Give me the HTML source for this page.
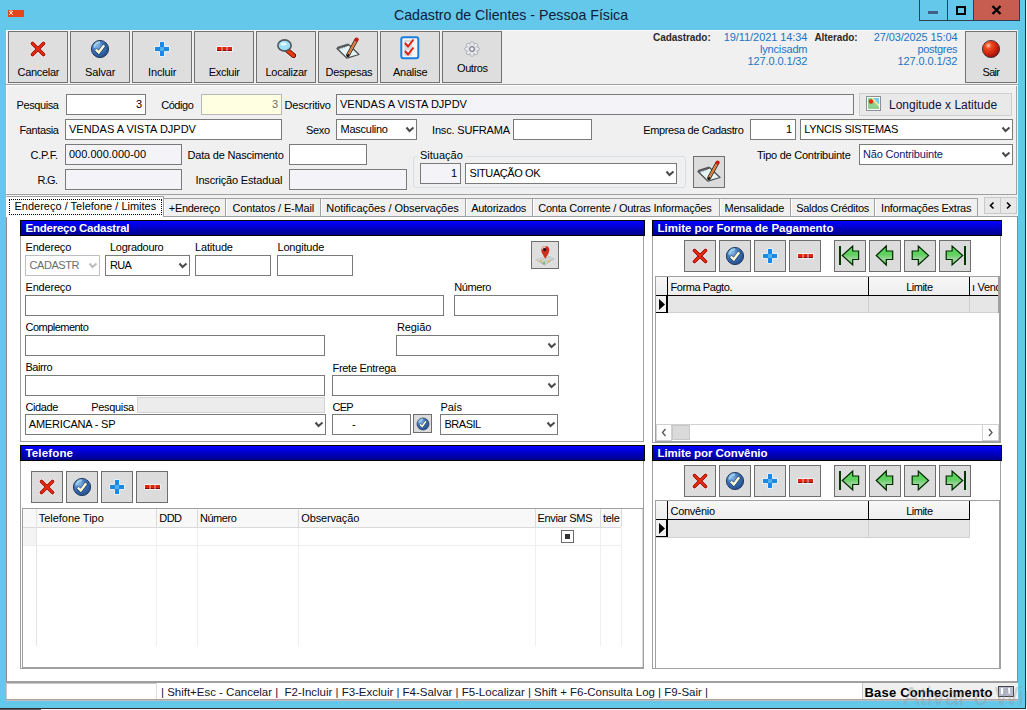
<!DOCTYPE html>
<html><head><meta charset="utf-8">
<style>
html,body{margin:0;padding:0;width:1027px;height:710px;overflow:hidden;background:#64c8ea}
body{position:relative;font-family:"Liberation Sans",sans-serif}
.a{position:absolute;box-sizing:border-box}
.t{position:absolute;white-space:nowrap;font-family:"Liberation Sans",sans-serif}
svg.a{overflow:visible}
</style></head><body>
<div class="a" style="left:0px;top:0px;width:1027px;height:710px;background:#64c8ea"></div>
<svg class="a" style="left:8px;top:10px" width="16" height="7" viewBox="0 0 16 7"><rect width="16" height="7" fill="#e5461e"/><path d="M1,1 L5,5 M5,1 L1,5 M3,0 V2" stroke="#fff6d0" stroke-width="0.9"/></svg>
<div class="t" style="top:8.08px;font-size:14.2px;line-height:14px;color:#10203a;font-weight:normal;left:311.0px;width:400px;text-align:center;">Cadastro de Clientes - Pessoa Física</div>
<div class="a" style="left:919px;top:0px;width:29px;height:21px;border:1px solid #2c3e50;border-top:none;background:#64c8ea"></div>
<div class="a" style="left:947px;top:0px;width:27px;height:21px;border:1px solid #2c3e50;border-top:none;background:#64c8ea"></div>
<div class="a" style="left:973px;top:0px;width:47px;height:21px;border:1px solid #2c3e50;border-top:none;background:#c75c50"></div>
<div class="a" style="left:928px;top:11px;width:10px;height:3px;background:#3f5f88"></div>
<div class="a" style="left:956px;top:6px;width:10px;height:9px;border:2px solid #000;box-sizing:border-box"></div>
<svg class="a" style="left:991px;top:5px" width="11" height="10" viewBox="0 0 11 10"><path d="M1.5,1 L9.5,9 M9.5,1 L1.5,9" stroke="#000" stroke-width="2.4"/></svg>
<div class="a" style="left:6px;top:30px;width:1012px;height:671px;background:#f0f0f0"></div>
<div class="a" style="left:6px;top:30px;width:1012px;height:1px;background:#fafafa"></div>
<div class="a" style="left:6px;top:30px;width:1px;height:55px;background:#fafafa"></div>
<div class="a" style="left:8px;top:31px;width:60px;height:52px;border:1px solid #727272;background:#dedede;"></div>
<div class="t" style="top:65.19px;font-size:11px;line-height:14px;color:#000;font-weight:normal;letter-spacing:-0.290px;left:17.5px;">Cancelar</div>
<div class="a" style="left:70px;top:31px;width:60px;height:52px;border:1px solid #727272;background:#dedede;"></div>
<div class="t" style="top:65.19px;font-size:11px;line-height:14px;color:#000;font-weight:normal;letter-spacing:-0.138px;left:85px;">Salvar</div>
<div class="a" style="left:132px;top:31px;width:60px;height:52px;border:1px solid #727272;background:#dedede;"></div>
<div class="t" style="top:65.19px;font-size:11px;line-height:14px;color:#000;font-weight:normal;letter-spacing:-0.141px;left:148px;">Incluir</div>
<div class="a" style="left:194px;top:31px;width:60px;height:52px;border:1px solid #727272;background:#dedede;"></div>
<div class="t" style="top:65.19px;font-size:11px;line-height:14px;color:#000;font-weight:normal;letter-spacing:-0.294px;left:208.75px;">Excluir</div>
<div class="a" style="left:256px;top:31px;width:60px;height:52px;border:1px solid #727272;background:#dedede;"></div>
<div class="t" style="top:65.19px;font-size:11px;line-height:14px;color:#000;font-weight:normal;letter-spacing:-0.254px;left:265.5px;">Localizar</div>
<div class="a" style="left:318px;top:31px;width:60px;height:52px;border:1px solid #727272;background:#dedede;"></div>
<div class="t" style="top:65.19px;font-size:11px;line-height:14px;color:#000;font-weight:normal;letter-spacing:-0.275px;left:325.5px;">Despesas</div>
<div class="a" style="left:380px;top:31px;width:60px;height:52px;border:1px solid #727272;background:#dedede;"></div>
<div class="t" style="top:65.19px;font-size:11px;line-height:14px;color:#000;font-weight:normal;letter-spacing:-0.263px;left:393px;">Analise</div>
<div class="a" style="left:442px;top:31px;width:60px;height:52px;border:1px solid #727272;background:#dedede;"></div>
<div class="t" style="top:61.19px;font-size:11px;line-height:14px;color:#000;font-weight:normal;letter-spacing:-0.403px;left:457px;">Outros</div>
<svg class="a" style="left:29px;top:40px" width="18" height="18" viewBox="0 0 18 18"><g stroke-linecap="round"><path d="M3.5,3.5 L14.5,14.5 M14.5,3.5 L3.5,14.5" stroke="#fff" stroke-width="5.2" opacity="0.8"/><path d="M3.5,3.5 L14.5,14.5 M14.5,3.5 L3.5,14.5" stroke="#8c0a05" stroke-width="3.8"/><path d="M3.5,3.5 L14.5,14.5 M14.5,3.5 L3.5,14.5" stroke="#e52a12" stroke-width="2.4"/></g></svg>
<svg class="a" style="left:90.0px;top:39.0px" width="20" height="20" viewBox="-1 -1 20 20"><defs><radialGradient id="gc100049" cx="0.35" cy="0.3" r="0.8"><stop offset="0" stop-color="#8ab8e8"/><stop offset="0.45" stop-color="#3e72b8"/><stop offset="1" stop-color="#1f4a85"/></radialGradient></defs><circle cx="9" cy="9" r="8.6" fill="url(#gc100049)" stroke="#1a2f55" stroke-width="0.9"/><path d="M3.2,7.5 A6.5,6.5 0 0 1 9,2.2" fill="none" stroke="#a8e0f0" stroke-width="2" opacity="0.8"/><path d="M4.5,9.6 L7.8,12.8 L13.6,4.8" fill="none" stroke="#1a3d70" stroke-width="3.6" stroke-linejoin="round"/><path d="M4.8,9.6 L7.8,12.4 L13.2,5.2" fill="none" stroke="#fffbd0" stroke-width="2.4" stroke-linejoin="miter"/></svg>
<svg class="a" style="left:153px;top:40px" width="18" height="18" viewBox="0 0 18 18"><path d="M6.5,1.5 H11.5 V6.5 H16.5 V11.5 H11.5 V16.5 H6.5 V11.5 H1.5 V6.5 H6.5 Z" fill="#1e88e0" stroke="#fff" stroke-width="0.8"/><rect x="7" y="7" width="4" height="4" fill="#4fb0f0"/></svg>
<svg class="a" style="left:216px;top:46px" width="17" height="6" viewBox="0 0 17 6"><rect x="0" y="0" width="17" height="6" fill="#fff" opacity="0.6"/><rect x="1" y="1" width="15" height="4" fill="#e0240e"/><rect x="1" y="4" width="15" height="1" fill="#8c0c05"/><rect x="5.5" y="1" width="1" height="4" fill="#f0c0a0"/><rect x="10.5" y="1" width="1" height="4" fill="#d0b8e0"/></svg>
<svg class="a" style="left:275px;top:38px" width="22" height="20" viewBox="0 0 22 20"><path d="M12,12 L18.5,17.5" stroke="#fff" stroke-width="6.5" stroke-linecap="round"/><path d="M12.5,12.5 L18.5,17.5" stroke="#4a0a10" stroke-width="5.2" stroke-linecap="round"/><path d="M12.5,12.5 L18.5,17.5" stroke="#e53a10" stroke-width="3.6" stroke-linecap="round"/><ellipse cx="9.5" cy="7.5" rx="6.6" ry="5.6" fill="#9ee0fa" stroke="#50545a" stroke-width="1.6"/><ellipse cx="8.5" cy="6" rx="3" ry="1.5" fill="#e8f8ff"/></svg>
<svg class="a" style="left:335px;top:35px" width="28" height="26" viewBox="0 0 28 26"><path d="M2,13.5 L13.5,9.5 L24,19.5 L12,23.2 Z" fill="#e4f6f8" stroke="#505050" stroke-width="1.3" stroke-linejoin="round"/><path d="M2.3,13.2 L13.3,9.6" stroke="#555" stroke-width="2.4"/><path d="M4,13.5 L5,15 M6.5,12.6 L7.5,14.2 M9,11.8 L10,13.4" stroke="#9ab" stroke-width="0.9"/><path d="M13,20 L21,5.5" stroke="#3a2a20" stroke-width="3.8" stroke-linecap="round"/><path d="M13,20 L21,5.5" stroke="#f2a860" stroke-width="2.1" stroke-linecap="round"/><path d="M13.6,18.6 L20.6,6.2" stroke="#d05020" stroke-width="0.8"/><circle cx="21.6" cy="4.6" r="2.1" fill="#c81a10"/><path d="M12.3,21.6 L13.6,19.2" stroke="#000" stroke-width="1.6"/></svg>
<svg class="a" style="left:400px;top:36px" width="20" height="24" viewBox="0 0 20 24"><rect x="1.3" y="1.3" width="17" height="21" rx="2" fill="#f4f4f4" stroke="#1a7fe0" stroke-width="2"/><rect x="5" y="5" width="6" height="6" fill="none" stroke="#c0c0c0" stroke-width="1"/><rect x="5" y="13" width="6" height="6" fill="none" stroke="#c0c0c0" stroke-width="1"/><path d="M5,7 L8,10.5 L13.5,3.5" fill="none" stroke="#e02010" stroke-width="2"/><path d="M5,15 L8,18.5 L13.5,11.5" fill="none" stroke="#e02010" stroke-width="2"/></svg>
<svg class="a" style="left:464px;top:40.65px" width="16" height="16" viewBox="0 0 16 16"><circle cx="13.40" cy="8.00" r="1.9" fill="#ececee" stroke="#a4a8b2" stroke-width="0.9"/><circle cx="11.82" cy="11.82" r="1.9" fill="#ececee" stroke="#a4a8b2" stroke-width="0.9"/><circle cx="8.00" cy="13.40" r="1.9" fill="#ececee" stroke="#a4a8b2" stroke-width="0.9"/><circle cx="4.18" cy="11.82" r="1.9" fill="#ececee" stroke="#a4a8b2" stroke-width="0.9"/><circle cx="2.60" cy="8.00" r="1.9" fill="#ececee" stroke="#a4a8b2" stroke-width="0.9"/><circle cx="4.18" cy="4.18" r="1.9" fill="#ececee" stroke="#a4a8b2" stroke-width="0.9"/><circle cx="8.00" cy="2.60" r="1.9" fill="#ececee" stroke="#a4a8b2" stroke-width="0.9"/><circle cx="11.82" cy="4.18" r="1.9" fill="#ececee" stroke="#a4a8b2" stroke-width="0.9"/><circle cx="8" cy="8" r="5" fill="#e4e4e6"/><circle cx="8" cy="8" r="2.3" fill="#f6f6f6" stroke="#7c808e" stroke-width="1.3"/></svg>
<div class="t" style="top:30.54px;font-size:10px;line-height:14px;color:#2a2a2a;font-weight:bold;letter-spacing:-0.061px;left:653px;">Cadastrado:</div>
<div class="t" style="top:30.19px;font-size:11px;line-height:14px;color:#1c74c4;font-weight:normal;letter-spacing:-0.072px;left:723.75px;">19/11/2021 14:34</div>
<div class="t" style="top:42.19px;font-size:11px;line-height:14px;color:#1c74c4;font-weight:normal;letter-spacing:-0.176px;left:760px;">lyncisadm</div>
<div class="t" style="top:54.19px;font-size:11px;line-height:14px;color:#1c74c4;font-weight:normal;letter-spacing:-0.107px;left:747.5px;">127.0.0.1/32</div>
<div class="t" style="top:30.54px;font-size:10px;line-height:14px;color:#2a2a2a;font-weight:bold;letter-spacing:-0.113px;left:814.5px;">Alterado:</div>
<div class="t" style="top:30.19px;font-size:11px;line-height:14px;color:#1c74c4;font-weight:normal;letter-spacing:-0.126px;left:873.75px;">27/03/2025 15:04</div>
<div class="t" style="top:42.19px;font-size:11px;line-height:14px;color:#1c74c4;font-weight:normal;letter-spacing:-0.315px;left:917.5px;">postgres</div>
<div class="t" style="top:54.19px;font-size:11px;line-height:14px;color:#1c74c4;font-weight:normal;letter-spacing:-0.107px;left:897.5px;">127.0.0.1/32</div>
<div class="a" style="left:965px;top:31px;width:52px;height:52px;border:1px solid #727272;background:#dedede;"></div>
<svg class="a" style="left:981px;top:39px" width="20" height="20" viewBox="0 0 20 20"><defs><radialGradient id="gball" cx="0.35" cy="0.3" r="0.75"><stop offset="0" stop-color="#ffd0b0"/><stop offset="0.25" stop-color="#f04a20"/><stop offset="0.7" stop-color="#c81e0e"/><stop offset="1" stop-color="#8a1008"/></radialGradient></defs><circle cx="10" cy="10" r="8.6" fill="url(#gball)" stroke="#2a2a3a" stroke-width="0.8"/></svg>
<div class="t" style="top:65.19px;font-size:11px;line-height:14px;color:#000;font-weight:normal;letter-spacing:-0.688px;left:982.5px;">Sair</div>
<div class="a" style="left:6px;top:84px;width:1012px;height:1px;background:#a0a0a0"></div>
<div class="a" style="left:6px;top:85px;width:1012px;height:1px;background:#ffffff"></div>
<div class="a" style="left:6px;top:86px;width:1px;height:108px;background:#ffffff"></div>
<div class="a" style="left:1016px;top:86px;width:1px;height:109px;background:#a0a0a0"></div>
<div class="a" style="left:6px;top:194px;width:1011px;height:1px;background:#a0a0a0"></div>
<div class="t" style="top:98.19px;font-size:11px;line-height:14px;color:#000;font-weight:normal;letter-spacing:-0.395px;left:16.5px;">Pesquisa</div>
<div class="a" style="left:66px;top:94px;width:80px;height:21px;border:1px solid #7a7a7a;background:#fff;"></div>
<div class="t" style="top:97.19px;font-size:11px;line-height:14px;color:#000;font-weight:normal;right:885px;text-align:right;">3</div>
<div class="t" style="top:98.19px;font-size:11px;line-height:14px;color:#000;font-weight:normal;letter-spacing:-0.472px;left:161.25px;">Código</div>
<div class="a" style="left:201px;top:94px;width:81px;height:21px;border:1px solid #b8b8b8;background:#ffffe1;"></div>
<div class="t" style="top:97.19px;font-size:11px;line-height:14px;color:#6d6d6d;font-weight:normal;right:749px;text-align:right;">3</div>
<div class="t" style="top:98.19px;font-size:11px;line-height:14px;color:#000;font-weight:normal;letter-spacing:-0.200px;left:284.5px;">Descritivo</div>
<div class="a" style="left:336px;top:94px;width:518px;height:21px;border:1px solid #7a7a7a;background:#f4f4f8;"></div>
<div class="t" style="top:97.19px;font-size:11px;line-height:14px;color:#000;font-weight:normal;left:340px;">VENDAS A VISTA DJPDV</div>
<div class="a" style="left:859px;top:93px;width:153px;height:23px;border:1px solid #cfcfcf;background:#e9e9e9"></div>
<svg class="a" style="left:866px;top:96px" width="15" height="15" viewBox="0 0 15 15"><rect x="0.5" y="0.5" width="14" height="14" fill="#fff" stroke="#8a8f98"/><rect x="2" y="2" width="11" height="11" fill="#8fd08f"/><path d="M7,2 H13 V9 Z" fill="#7ccbf0"/><path d="M6,2 L13,10" stroke="#f6f0a0" stroke-width="1.5"/><circle cx="5" cy="5.5" r="2.2" fill="#e03010"/></svg>
<div class="t" style="top:97.84px;font-size:12px;line-height:14px;color:#10103a;font-weight:normal;left:889px;">Longitude x Latitude</div>
<div class="t" style="top:123.19px;font-size:11px;line-height:14px;color:#000;font-weight:normal;letter-spacing:-0.386px;left:19.5px;">Fantasia</div>
<div class="a" style="left:65px;top:119px;width:217px;height:21px;border:1px solid #7a7a7a;background:#fff;"></div>
<div class="t" style="top:122.19px;font-size:11px;line-height:14px;color:#000;font-weight:normal;left:69px;">VENDAS A VISTA DJPDV</div>
<div class="t" style="top:123.19px;font-size:11px;line-height:14px;color:#000;font-weight:normal;letter-spacing:-0.359px;left:306px;">Sexo</div>
<div class="a" style="left:336px;top:119px;width:81px;height:21px;border:1px solid #7a7a7a;background:#fff;"></div>
<div class="t" style="top:122.19px;font-size:11px;line-height:14px;color:#000;font-weight:normal;letter-spacing:-0.254px;left:340.5px;">Masculino</div>
<svg class="a" style="left:405px;top:126px" width="10" height="8" viewBox="0 0 10 8"><polyline points="1.5,1.5 4.5,5 8.5,1.5" fill="none" stroke="#4a4a4a" stroke-width="2"/></svg>
<div class="t" style="top:123.19px;font-size:11px;line-height:14px;color:#000;font-weight:normal;letter-spacing:-0.173px;left:432px;">Insc. SUFRAMA</div>
<div class="a" style="left:513px;top:119px;width:79px;height:21px;border:1px solid #7a7a7a;background:#fff;"></div>
<div class="t" style="top:123.19px;font-size:11px;line-height:14px;color:#000;font-weight:normal;letter-spacing:-0.361px;left:643.25px;">Empresa de Cadastro</div>
<div class="a" style="left:750px;top:119px;width:46px;height:21px;border:1px solid #7a7a7a;background:#fff;"></div>
<div class="t" style="top:122.19px;font-size:11px;line-height:14px;color:#000;font-weight:normal;right:235px;text-align:right;">1</div>
<div class="a" style="left:800px;top:119px;width:213px;height:21px;border:1px solid #7a7a7a;background:#fff;"></div>
<div class="t" style="top:122.19px;font-size:11px;line-height:14px;color:#000;font-weight:normal;letter-spacing:-0.258px;left:804.25px;">LYNCIS SISTEMAS</div>
<svg class="a" style="left:1001px;top:126px" width="10" height="8" viewBox="0 0 10 8"><polyline points="1.5,1.5 4.5,5 8.5,1.5" fill="none" stroke="#4a4a4a" stroke-width="2"/></svg>
<div class="t" style="top:148.19px;font-size:11px;line-height:14px;color:#000;font-weight:normal;letter-spacing:-0.206px;left:30.5px;">C.P.F.</div>
<div class="a" style="left:65px;top:144px;width:117px;height:21px;border:1px solid #7a7a7a;background:#f4f4f8;"></div>
<div class="t" style="top:147.19px;font-size:11px;line-height:14px;color:#000;font-weight:normal;left:69px;">000.000.000-00</div>
<div class="t" style="top:148.19px;font-size:11px;line-height:14px;color:#000;font-weight:normal;letter-spacing:-0.201px;left:187.5px;">Data de Nascimento</div>
<div class="a" style="left:289px;top:144px;width:78px;height:21px;border:1px solid #7a7a7a;background:#fff;"></div>
<div class="t" style="top:148.19px;font-size:11px;line-height:14px;color:#000;font-weight:normal;letter-spacing:-0.258px;left:757px;">Tipo de Contribuinte</div>
<div class="a" style="left:859px;top:144px;width:154px;height:21px;border:1px solid #7a7a7a;background:#fff;"></div>
<div class="t" style="top:147.19px;font-size:11px;line-height:14px;color:#0c1a6a;font-weight:normal;letter-spacing:-0.171px;left:863px;">Não Contribuinte</div>
<svg class="a" style="left:1001px;top:151px" width="10" height="8" viewBox="0 0 10 8"><polyline points="1.5,1.5 4.5,5 8.5,1.5" fill="none" stroke="#4a4a4a" stroke-width="2"/></svg>
<div class="t" style="top:173.19px;font-size:11px;line-height:14px;color:#000;font-weight:normal;letter-spacing:-0.708px;left:37.5px;">R.G.</div>
<div class="a" style="left:65px;top:169px;width:117px;height:21px;border:1px solid #7a7a7a;background:#f4f4f8;"></div>
<div class="t" style="top:173.19px;font-size:11px;line-height:14px;color:#000;font-weight:normal;letter-spacing:-0.170px;left:195.5px;">Inscrição Estadual</div>
<div class="a" style="left:289px;top:169px;width:118px;height:21px;border:1px solid #7a7a7a;background:#f4f4f8;"></div>
<div class="a" style="left:413px;top:156px;width:273px;height:32px;border:1px solid #d8e0e6;border-radius:3px"></div>
<div class="a" style="left:418px;top:152px;width:48px;height:8px;background:#f0f0f0"></div>
<div class="t" style="top:148.19px;font-size:11px;line-height:14px;color:#000;font-weight:normal;left:420px;">Situação</div>
<div class="a" style="left:420px;top:163px;width:41px;height:21px;border:1px solid #7a7a7a;background:#f4f4f8;"></div>
<div class="t" style="top:166.19px;font-size:11px;line-height:14px;color:#000;font-weight:normal;right:570px;text-align:right;">1</div>
<div class="a" style="left:465px;top:163px;width:212px;height:21px;border:1px solid #7a7a7a;background:#fff;"></div>
<div class="t" style="top:166.19px;font-size:11px;line-height:14px;color:#000;font-weight:normal;letter-spacing:-0.419px;left:469.5px;">SITUAÇÃO OK</div>
<svg class="a" style="left:665px;top:170px" width="10" height="8" viewBox="0 0 10 8"><polyline points="1.5,1.5 4.5,5 8.5,1.5" fill="none" stroke="#4a4a4a" stroke-width="2"/></svg>
<div class="a" style="left:693px;top:156px;width:32px;height:32px;border:1px solid #6e6e6e;background:#dcdcdc"></div>
<svg class="a" style="left:696px;top:158px" width="28" height="26" viewBox="0 0 28 26"><path d="M2,13.5 L13.5,9.5 L24,19.5 L12,23.2 Z" fill="#e4f6f8" stroke="#505050" stroke-width="1.3" stroke-linejoin="round"/><path d="M2.3,13.2 L13.3,9.6" stroke="#555" stroke-width="2.4"/><path d="M4,13.5 L5,15 M6.5,12.6 L7.5,14.2 M9,11.8 L10,13.4" stroke="#9ab" stroke-width="0.9"/><path d="M13,20 L21,5.5" stroke="#3a2a20" stroke-width="3.8" stroke-linecap="round"/><path d="M13,20 L21,5.5" stroke="#f2a860" stroke-width="2.1" stroke-linecap="round"/><path d="M13.6,18.6 L20.6,6.2" stroke="#d05020" stroke-width="0.8"/><circle cx="21.6" cy="4.6" r="2.1" fill="#c81a10"/><path d="M12.3,21.6 L13.6,19.2" stroke="#000" stroke-width="1.6"/></svg>
<div class="a" style="left:6px;top:216px;width:1012px;height:466px;border:1px solid #a0a0a0;border-left-color:#8a8a90;border-right-color:#8a8a90;background:#fff"></div>
<div class="a" style="left:163px;top:198px;width:64px;height:18px;border:1px solid #a0a0a0;border-bottom:none;background:#f0f0f0"></div>
<div class="a" style="left:225px;top:198px;width:96px;height:18px;border:1px solid #a0a0a0;border-bottom:none;background:#f0f0f0"></div>
<div class="a" style="left:320px;top:198px;width:146px;height:18px;border:1px solid #a0a0a0;border-bottom:none;background:#f0f0f0"></div>
<div class="a" style="left:465px;top:198px;width:68px;height:18px;border:1px solid #a0a0a0;border-bottom:none;background:#f0f0f0"></div>
<div class="a" style="left:532px;top:198px;width:188px;height:18px;border:1px solid #a0a0a0;border-bottom:none;background:#f0f0f0"></div>
<div class="a" style="left:719px;top:198px;width:72px;height:18px;border:1px solid #a0a0a0;border-bottom:none;background:#f0f0f0"></div>
<div class="a" style="left:790px;top:198px;width:85px;height:18px;border:1px solid #a0a0a0;border-bottom:none;background:#f0f0f0"></div>
<div class="a" style="left:874px;top:198px;width:104px;height:18px;border:1px solid #a0a0a0;border-bottom:none;background:#f0f0f0"></div>
<div class="a" style="left:164px;top:199px;width:1px;height:17px;background:#fff"></div>
<div class="t" style="top:201.19px;font-size:11px;line-height:14px;color:#000;font-weight:normal;letter-spacing:-0.283px;left:168.75px;">+Endereço</div>
<div class="a" style="left:226px;top:199px;width:1px;height:17px;background:#fff"></div>
<div class="t" style="top:201.19px;font-size:11px;line-height:14px;color:#000;font-weight:normal;letter-spacing:-0.164px;left:232.5px;">Contatos / E-Mail</div>
<div class="a" style="left:321px;top:199px;width:1px;height:17px;background:#fff"></div>
<div class="t" style="top:201.19px;font-size:11px;line-height:14px;color:#000;font-weight:normal;letter-spacing:-0.056px;left:326.25px;">Notificações / Observações</div>
<div class="a" style="left:466px;top:199px;width:1px;height:17px;background:#fff"></div>
<div class="t" style="top:201.19px;font-size:11px;line-height:14px;color:#000;font-weight:normal;letter-spacing:-0.309px;left:471.25px;">Autorizados</div>
<div class="a" style="left:533px;top:199px;width:1px;height:17px;background:#fff"></div>
<div class="t" style="top:201.19px;font-size:11px;line-height:14px;color:#000;font-weight:normal;letter-spacing:-0.220px;left:538.25px;">Conta Corrente / Outras Informações</div>
<div class="a" style="left:720px;top:199px;width:1px;height:17px;background:#fff"></div>
<div class="t" style="top:201.19px;font-size:11px;line-height:14px;color:#000;font-weight:normal;letter-spacing:-0.263px;left:724.5px;">Mensalidade</div>
<div class="a" style="left:791px;top:199px;width:1px;height:17px;background:#fff"></div>
<div class="t" style="top:201.19px;font-size:11px;line-height:14px;color:#000;font-weight:normal;letter-spacing:-0.333px;left:796.25px;">Saldos Créditos</div>
<div class="a" style="left:875px;top:199px;width:1px;height:17px;background:#fff"></div>
<div class="t" style="top:201.19px;font-size:11px;line-height:14px;color:#000;font-weight:normal;letter-spacing:-0.263px;left:881.1px;">Informações Extras</div>
<div class="a" style="left:6px;top:196px;width:158px;height:21px;border:1px solid #a0a0a0;border-left-color:#fff;border-bottom:none;background:#fff"></div>
<div class="a" style="left:9px;top:199px;width:153px;height:16px;border:1px dotted #000"></div>
<div class="t" style="top:199.19px;font-size:11px;line-height:14px;color:#000;font-weight:normal;letter-spacing:0.003px;left:14.5px;">Endereço / Telefone / Limites</div>
<div class="a" style="left:984px;top:197px;width:17px;height:17px;border:1px solid #c8c8c8;background:#e8e8e8"></div>
<div class="a" style="left:1000px;top:197px;width:17px;height:17px;border:1px solid #c8c8c8;background:#e8e8e8"></div>
<svg class="a" style="left:988px;top:201px" width="9" height="9" viewBox="0 0 9 9"><polyline points="5.5,1.5 2.5,4.5 5.5,7.5" fill="none" stroke="#000" stroke-width="1.6"/></svg>
<svg class="a" style="left:1004px;top:201px" width="9" height="9" viewBox="0 0 9 9"><polyline points="3,1.5 6,4.5 3,7.5" fill="none" stroke="#000" stroke-width="1.6"/></svg>
<div class="a" style="left:20px;top:220px;width:624px;height:222px;border:1px solid #a0a0a0;background:#fff"></div>
<div class="a" style="left:20px;top:220px;width:625px;height:16px;border:1px solid #000;background:linear-gradient(#0000ff,#00008c);"></div>
<div class="t" style="top:221.02px;font-size:11.5px;line-height:14px;color:#fff;font-weight:bold;letter-spacing:-0.236px;left:25.5px;">Endereço Cadastral</div>
<div class="t" style="top:240.19px;font-size:11px;line-height:14px;color:#000;font-weight:normal;letter-spacing:-0.192px;left:25.5px;">Endereço</div>
<div class="t" style="top:240.19px;font-size:11px;line-height:14px;color:#000;font-weight:normal;letter-spacing:-0.281px;left:110px;">Logradouro</div>
<div class="t" style="top:240.19px;font-size:11px;line-height:14px;color:#000;font-weight:normal;letter-spacing:-0.165px;left:195px;">Latitude</div>
<div class="t" style="top:240.19px;font-size:11px;line-height:14px;color:#000;font-weight:normal;letter-spacing:-0.197px;left:277.5px;">Longitude</div>
<div class="a" style="left:25px;top:255px;width:75px;height:21px;border:1px solid #bcbfc3;background:#fff;"></div>
<div class="t" style="top:258.19px;font-size:11px;line-height:14px;color:#6d6d6d;font-weight:normal;letter-spacing:-0.427px;left:29.5px;">CADASTR</div>
<svg class="a" style="left:88px;top:262px" width="10" height="8" viewBox="0 0 10 8"><polyline points="1.5,1.5 4.5,5 8.5,1.5" fill="none" stroke="#bdbdbd" stroke-width="2"/></svg>
<div class="a" style="left:105px;top:255px;width:85px;height:21px;border:1px solid #7a7a7a;background:#fff;"></div>
<div class="t" style="top:258.19px;font-size:11px;line-height:14px;color:#000;font-weight:normal;letter-spacing:-0.742px;left:110px;">RUA</div>
<svg class="a" style="left:178px;top:262px" width="10" height="8" viewBox="0 0 10 8"><polyline points="1.5,1.5 4.5,5 8.5,1.5" fill="none" stroke="#4a4a4a" stroke-width="2"/></svg>
<div class="a" style="left:195px;top:255px;width:76px;height:21px;border:1px solid #7a7a7a;background:#fff;"></div>
<div class="a" style="left:277px;top:255px;width:76px;height:21px;border:1px solid #7a7a7a;background:#fff;"></div>
<div class="a" style="left:531px;top:241px;width:28px;height:28px;border:1px solid #6e6e6e;background:#dedede"></div>
<svg class="a" style="left:532px;top:242px" width="26" height="26" viewBox="0 0 26 26"><path d="M1.5,17.5 L15,12.5 L24.5,16.5 L12.5,24.5 Z" fill="#c2c2c2" stroke="#f8f8f8" stroke-width="1" stroke-dasharray="1.2,0.8"/><path d="M4.5,17.5 L15,13.8 L21.5,16.5 L12.5,22.5 Z" fill="#d4d8d2"/><path d="M6,19 L18,15 M9,21 L20,17" stroke="#b8b8b8" stroke-width="0.7"/><circle cx="12" cy="21" r="1.5" fill="#7cc07c"/><circle cx="17" cy="19.5" r="1.1" fill="#f0b050"/><circle cx="9" cy="19" r="1" fill="#f0b050"/><path d="M13.3,16.8 C11.5,13.5 9.3,11 9.3,8 A4,4 0 0 1 17.3,8 C17.3,11 15.2,13.5 13.3,16.8 Z" fill="#cc2e1c"/><path d="M10,7.5 A3.4,3.4 0 0 1 13,4.6 L13,6" stroke="#e8b8a8" stroke-width="1.4" fill="none"/><circle cx="12.8" cy="7.6" r="1.6" fill="#1a1a1a"/></svg>
<div class="t" style="top:280.19px;font-size:11px;line-height:14px;color:#000;font-weight:normal;letter-spacing:-0.192px;left:25.5px;">Endereço</div>
<div class="t" style="top:280.19px;font-size:11px;line-height:14px;color:#000;font-weight:normal;letter-spacing:-0.425px;left:454.25px;">Número</div>
<div class="a" style="left:25px;top:295px;width:419px;height:21px;border:1px solid #7a7a7a;background:#fff;"></div>
<div class="a" style="left:454px;top:295px;width:104px;height:21px;border:1px solid #7a7a7a;background:#fff;"></div>
<div class="t" style="top:320.19px;font-size:11px;line-height:14px;color:#000;font-weight:normal;letter-spacing:-0.523px;left:25.5px;">Complemento</div>
<div class="t" style="top:320.19px;font-size:11px;line-height:14px;color:#000;font-weight:normal;letter-spacing:-0.122px;left:397px;">Região</div>
<div class="a" style="left:25px;top:335px;width:300px;height:21px;border:1px solid #7a7a7a;background:#fff;"></div>
<div class="a" style="left:396px;top:335px;width:163px;height:21px;border:1px solid #7a7a7a;background:#fff;"></div>
<svg class="a" style="left:547px;top:342px" width="10" height="8" viewBox="0 0 10 8"><polyline points="1.5,1.5 4.5,5 8.5,1.5" fill="none" stroke="#4a4a4a" stroke-width="2"/></svg>
<div class="t" style="top:360.19px;font-size:11px;line-height:14px;color:#000;font-weight:normal;letter-spacing:-0.469px;left:25.5px;">Bairro</div>
<div class="t" style="top:361.19px;font-size:11px;line-height:14px;color:#000;font-weight:normal;letter-spacing:-0.293px;left:332.5px;">Frete Entrega</div>
<div class="a" style="left:25px;top:375px;width:300px;height:21px;border:1px solid #7a7a7a;background:#fff;"></div>
<div class="a" style="left:332px;top:375px;width:227px;height:21px;border:1px solid #7a7a7a;background:#fff;"></div>
<svg class="a" style="left:547px;top:382px" width="10" height="8" viewBox="0 0 10 8"><polyline points="1.5,1.5 4.5,5 8.5,1.5" fill="none" stroke="#4a4a4a" stroke-width="2"/></svg>
<div class="t" style="top:400.19px;font-size:11px;line-height:14px;color:#000;font-weight:normal;letter-spacing:-0.422px;left:25.5px;">Cidade</div>
<div class="t" style="top:400.19px;font-size:11px;line-height:14px;color:#000;font-weight:normal;letter-spacing:-0.324px;left:91.25px;">Pesquisa</div>
<div class="a" style="left:137px;top:397px;width:188px;height:16px;border:1px solid #d4d4d4;background:#ececec;"></div>
<div class="t" style="top:400.19px;font-size:11px;line-height:14px;color:#000;font-weight:normal;letter-spacing:-0.812px;left:332.5px;">CEP</div>
<div class="t" style="top:400.19px;font-size:11px;line-height:14px;color:#000;font-weight:normal;letter-spacing:-0.172px;left:440.5px;">País</div>
<div class="a" style="left:25px;top:414px;width:301px;height:21px;border:1px solid #7a7a7a;background:#fff;"></div>
<div class="t" style="top:417.19px;font-size:11px;line-height:14px;color:#000;font-weight:normal;letter-spacing:-0.192px;left:28.75px;">AMERICANA - SP</div>
<svg class="a" style="left:314px;top:421px" width="10" height="8" viewBox="0 0 10 8"><polyline points="1.5,1.5 4.5,5 8.5,1.5" fill="none" stroke="#4a4a4a" stroke-width="2"/></svg>
<div class="a" style="left:332px;top:414px;width:79px;height:21px;border:1px solid #7a7a7a;background:#fff;"></div>
<div class="t" style="top:417.19px;font-size:11px;line-height:14px;color:#000;font-weight:normal;left:352px;">-</div>
<div class="a" style="left:413px;top:414px;width:19px;height:19px;border:1px solid #6e6e6e;background:#dcdcdc"></div>
<svg class="a" style="left:415.5px;top:416.5px" width="14" height="14" viewBox="-1 -1 20 20"><defs><radialGradient id="gc422923" cx="0.35" cy="0.3" r="0.8"><stop offset="0" stop-color="#8ab8e8"/><stop offset="0.45" stop-color="#3e72b8"/><stop offset="1" stop-color="#1f4a85"/></radialGradient></defs><circle cx="9" cy="9" r="8.6" fill="url(#gc422923)" stroke="#1a2f55" stroke-width="0.9"/><path d="M3.2,7.5 A6.5,6.5 0 0 1 9,2.2" fill="none" stroke="#a8e0f0" stroke-width="2" opacity="0.8"/><path d="M4.5,9.6 L7.8,12.8 L13.6,4.8" fill="none" stroke="#1a3d70" stroke-width="3.6" stroke-linejoin="round"/><path d="M4.8,9.6 L7.8,12.4 L13.2,5.2" fill="none" stroke="#fffbd0" stroke-width="2.4" stroke-linejoin="miter"/></svg>
<div class="a" style="left:440px;top:414px;width:118px;height:21px;border:1px solid #7a7a7a;background:#fff;"></div>
<div class="t" style="top:417.19px;font-size:11px;line-height:14px;color:#000;font-weight:normal;letter-spacing:-0.478px;left:444.5px;">BRASIL</div>
<svg class="a" style="left:546px;top:421px" width="10" height="8" viewBox="0 0 10 8"><polyline points="1.5,1.5 4.5,5 8.5,1.5" fill="none" stroke="#4a4a4a" stroke-width="2"/></svg>
<div class="a" style="left:652px;top:220px;width:349px;height:223px;border:1px solid #a0a0a0;background:#fff"></div>
<div class="a" style="left:652px;top:220px;width:350px;height:16px;border:1px solid #000;background:linear-gradient(#0000ff,#00008c);"></div>
<div class="t" style="top:221.02px;font-size:11.5px;line-height:14px;color:#fff;font-weight:bold;letter-spacing:0.009px;left:657.5px;">Limite por Forma de Pagamento</div>
<div class="a" style="left:684px;top:240px;width:32px;height:32px;border:1px solid #6e6e6e;background:#dcdcdc;"></div>
<div class="a" style="left:719px;top:240px;width:32px;height:32px;border:1px solid #6e6e6e;background:#dcdcdc;"></div>
<div class="a" style="left:754px;top:240px;width:32px;height:32px;border:1px solid #6e6e6e;background:#dcdcdc;"></div>
<div class="a" style="left:789px;top:240px;width:32px;height:32px;border:1px solid #6e6e6e;background:#dcdcdc;"></div>
<svg class="a" style="left:691px;top:247px" width="18" height="18" viewBox="0 0 18 18"><g stroke-linecap="round"><path d="M3.5,3.5 L14.5,14.5 M14.5,3.5 L3.5,14.5" stroke="#fff" stroke-width="5.2" opacity="0.8"/><path d="M3.5,3.5 L14.5,14.5 M14.5,3.5 L3.5,14.5" stroke="#8c0a05" stroke-width="3.8"/><path d="M3.5,3.5 L14.5,14.5 M14.5,3.5 L3.5,14.5" stroke="#e52a12" stroke-width="2.4"/></g></svg>
<svg class="a" style="left:725.0px;top:246.0px" width="20" height="20" viewBox="-1 -1 20 20"><defs><radialGradient id="gc735256" cx="0.35" cy="0.3" r="0.8"><stop offset="0" stop-color="#8ab8e8"/><stop offset="0.45" stop-color="#3e72b8"/><stop offset="1" stop-color="#1f4a85"/></radialGradient></defs><circle cx="9" cy="9" r="8.6" fill="url(#gc735256)" stroke="#1a2f55" stroke-width="0.9"/><path d="M3.2,7.5 A6.5,6.5 0 0 1 9,2.2" fill="none" stroke="#a8e0f0" stroke-width="2" opacity="0.8"/><path d="M4.5,9.6 L7.8,12.8 L13.6,4.8" fill="none" stroke="#1a3d70" stroke-width="3.6" stroke-linejoin="round"/><path d="M4.8,9.6 L7.8,12.4 L13.2,5.2" fill="none" stroke="#fffbd0" stroke-width="2.4" stroke-linejoin="miter"/></svg>
<svg class="a" style="left:761px;top:247px" width="18" height="18" viewBox="0 0 18 18"><path d="M6.5,1.5 H11.5 V6.5 H16.5 V11.5 H11.5 V16.5 H6.5 V11.5 H1.5 V6.5 H6.5 Z" fill="#1e88e0" stroke="#fff" stroke-width="0.8"/><rect x="7" y="7" width="4" height="4" fill="#4fb0f0"/></svg>
<svg class="a" style="left:797px;top:253px" width="17" height="6" viewBox="0 0 17 6"><rect x="0" y="0" width="17" height="6" fill="#fff" opacity="0.6"/><rect x="1" y="1" width="15" height="4" fill="#e0240e"/><rect x="1" y="4" width="15" height="1" fill="#8c0c05"/><rect x="5.5" y="1" width="1" height="4" fill="#f0c0a0"/><rect x="10.5" y="1" width="1" height="4" fill="#d0b8e0"/></svg>
<div class="a" style="left:834px;top:240px;width:32px;height:32px;border:1px solid #6e6e6e;background:#dcdcdc;"></div>
<svg class="a" style="left:834px;top:240px" width="32" height="32" viewBox="0 0 32 32"><defs><linearGradient id="ga834240" x1="0" y1="0" x2="0" y2="1"><stop offset="0" stop-color="#52d652"/><stop offset="0.45" stop-color="#60d060"/><stop offset="0.7" stop-color="#a0d4a0"/><stop offset="1" stop-color="#48c848"/></linearGradient></defs><rect x="5" y="6" width="2" height="19" fill="#003a00"/><polygon points="8.3,15.5 18.7,6 18.7,11 24.6,11 24.6,19.5 18.7,19.5 18.7,25" fill="url(#ga834240)" stroke="#002800" stroke-width="1.2" stroke-linejoin="miter"/></svg>
<div class="a" style="left:869px;top:240px;width:32px;height:32px;border:1px solid #6e6e6e;background:#dcdcdc;"></div>
<svg class="a" style="left:869px;top:240px" width="32" height="32" viewBox="0 0 32 32"><defs><linearGradient id="ga869240" x1="0" y1="0" x2="0" y2="1"><stop offset="0" stop-color="#52d652"/><stop offset="0.45" stop-color="#60d060"/><stop offset="0.7" stop-color="#a0d4a0"/><stop offset="1" stop-color="#48c848"/></linearGradient></defs><polygon points="7.3,15.5 17.3,6 17.3,11 23.7,11 23.7,19.5 17.3,19.5 17.3,25" fill="url(#ga869240)" stroke="#002800" stroke-width="1.2" stroke-linejoin="miter"/></svg>
<div class="a" style="left:904px;top:240px;width:32px;height:32px;border:1px solid #6e6e6e;background:#dcdcdc;"></div>
<svg class="a" style="left:904px;top:240px" width="32" height="32" viewBox="0 0 32 32"><defs><linearGradient id="ga904240" x1="0" y1="0" x2="0" y2="1"><stop offset="0" stop-color="#52d652"/><stop offset="0.45" stop-color="#60d060"/><stop offset="0.7" stop-color="#a0d4a0"/><stop offset="1" stop-color="#48c848"/></linearGradient></defs><polygon points="8.2,11 14.3,11 14.3,6 24.6,15.5 14.3,25 14.3,19.5 8.2,19.5" fill="url(#ga904240)" stroke="#002800" stroke-width="1.2" stroke-linejoin="miter"/></svg>
<div class="a" style="left:939px;top:240px;width:32px;height:32px;border:1px solid #6e6e6e;background:#dcdcdc;"></div>
<svg class="a" style="left:939px;top:240px" width="32" height="32" viewBox="0 0 32 32"><defs><linearGradient id="ga939240" x1="0" y1="0" x2="0" y2="1"><stop offset="0" stop-color="#52d652"/><stop offset="0.45" stop-color="#60d060"/><stop offset="0.7" stop-color="#a0d4a0"/><stop offset="1" stop-color="#48c848"/></linearGradient></defs><rect x="25" y="6" width="2" height="19" fill="#003a00"/><polygon points="7.2,11 13.1,11 13.1,6 23.7,15.5 13.1,25 13.1,19.5 7.2,19.5" fill="url(#ga939240)" stroke="#002800" stroke-width="1.2" stroke-linejoin="miter"/></svg>
<div class="a" style="left:655px;top:276px;width:345px;height:166px;border:1px solid #a0a0a0;background:#fff"></div>
<div class="a" style="left:656px;top:277px;width:343px;height:19px;background:linear-gradient(#f8f8f8,#ececec)"></div>
<div class="a" style="left:656px;top:295px;width:343px;height:1px;background:#000"></div>
<div class="a" style="left:656px;top:296px;width:343px;height:17px;background:#e6e6e6"></div>
<div class="a" style="left:656px;top:312px;width:343px;height:1px;background:#cfcfcf"></div>
<div class="a" style="left:667px;top:277px;width:1px;height:36px;background:#000"></div>
<div class="a" style="left:656px;top:296px;width:11px;height:17px;background:#f0f0f0;border-right:1px solid #000;border-bottom:1px solid #000"></div>
<svg class="a" style="left:658px;top:298px" width="8" height="13" viewBox="0 0 8 13"><polygon points="1,1 7,6.5 1,12" fill="#000"/></svg>
<div class="a" style="left:868px;top:277px;width:1px;height:19px;background:#000"></div>
<div class="a" style="left:868px;top:296px;width:1px;height:17px;background:#cfcfcf"></div>
<div class="a" style="left:969px;top:277px;width:1px;height:19px;background:#000"></div>
<div class="a" style="left:969px;top:296px;width:1px;height:17px;background:#cfcfcf"></div>
<div class="t" style="top:280.19px;font-size:11px;line-height:14px;color:#000;font-weight:normal;letter-spacing:-0.422px;left:670.5px;">Forma Pagto.</div>
<div class="t" style="top:280.19px;font-size:11px;line-height:14px;color:#000;font-weight:normal;letter-spacing:-0.519px;left:906.25px;">Limite</div>
<div class="a" style="left:970px;top:277px;width:28px;height:18px;overflow:hidden">
<div class="t" style="top:3.19px;font-size:11px;line-height:14px;color:#000;font-weight:normal;letter-spacing:-0.3px;left:2px;">ı Vend</div>
</div>
<div class="a" style="left:998px;top:277px;width:1px;height:36px;background:#a0a0a0"></div>
<div class="a" style="left:656px;top:424px;width:343px;height:17px;background:#fff;border-top:1px solid #d0d0d0"></div>
<div class="a" style="left:656px;top:424px;width:16px;height:17px;border:1px solid #d0d0d0;background:#fff"></div>
<div class="a" style="left:672px;top:425px;width:18px;height:15px;background:#dadada;border:1px solid #c8c8c8"></div>
<div class="a" style="left:982px;top:424px;width:17px;height:17px;border:1px solid #d0d0d0;background:#fff"></div>
<svg class="a" style="left:660px;top:428px" width="9" height="9" viewBox="0 0 9 9"><polyline points="5.5,1 2.5,4.5 5.5,8" fill="none" stroke="#555" stroke-width="1.3"/></svg>
<svg class="a" style="left:986px;top:428px" width="9" height="9" viewBox="0 0 9 9"><polyline points="3,1 6,4.5 3,8" fill="none" stroke="#555" stroke-width="1.3"/></svg>
<div class="a" style="left:20px;top:445px;width:624px;height:224px;border:1px solid #a0a0a0;background:#fff"></div>
<div class="a" style="left:20px;top:445px;width:625px;height:16px;border:1px solid #000;background:linear-gradient(#0000ff,#00008c);"></div>
<div class="t" style="top:446.02px;font-size:11.5px;line-height:14px;color:#fff;font-weight:bold;letter-spacing:0.152px;left:25.5px;">Telefone</div>
<div class="a" style="left:31px;top:471px;width:32px;height:32px;border:1px solid #6e6e6e;background:#dcdcdc;"></div>
<div class="a" style="left:66px;top:471px;width:32px;height:32px;border:1px solid #6e6e6e;background:#dcdcdc;"></div>
<div class="a" style="left:101px;top:471px;width:32px;height:32px;border:1px solid #6e6e6e;background:#dcdcdc;"></div>
<div class="a" style="left:136px;top:471px;width:32px;height:32px;border:1px solid #6e6e6e;background:#dcdcdc;"></div>
<svg class="a" style="left:38px;top:478px" width="18" height="18" viewBox="0 0 18 18"><g stroke-linecap="round"><path d="M3.5,3.5 L14.5,14.5 M14.5,3.5 L3.5,14.5" stroke="#fff" stroke-width="5.2" opacity="0.8"/><path d="M3.5,3.5 L14.5,14.5 M14.5,3.5 L3.5,14.5" stroke="#8c0a05" stroke-width="3.8"/><path d="M3.5,3.5 L14.5,14.5 M14.5,3.5 L3.5,14.5" stroke="#e52a12" stroke-width="2.4"/></g></svg>
<svg class="a" style="left:72.0px;top:477.0px" width="20" height="20" viewBox="-1 -1 20 20"><defs><radialGradient id="gc82487" cx="0.35" cy="0.3" r="0.8"><stop offset="0" stop-color="#8ab8e8"/><stop offset="0.45" stop-color="#3e72b8"/><stop offset="1" stop-color="#1f4a85"/></radialGradient></defs><circle cx="9" cy="9" r="8.6" fill="url(#gc82487)" stroke="#1a2f55" stroke-width="0.9"/><path d="M3.2,7.5 A6.5,6.5 0 0 1 9,2.2" fill="none" stroke="#a8e0f0" stroke-width="2" opacity="0.8"/><path d="M4.5,9.6 L7.8,12.8 L13.6,4.8" fill="none" stroke="#1a3d70" stroke-width="3.6" stroke-linejoin="round"/><path d="M4.8,9.6 L7.8,12.4 L13.2,5.2" fill="none" stroke="#fffbd0" stroke-width="2.4" stroke-linejoin="miter"/></svg>
<svg class="a" style="left:108px;top:478px" width="18" height="18" viewBox="0 0 18 18"><path d="M6.5,1.5 H11.5 V6.5 H16.5 V11.5 H11.5 V16.5 H6.5 V11.5 H1.5 V6.5 H6.5 Z" fill="#1e88e0" stroke="#fff" stroke-width="0.8"/><rect x="7" y="7" width="4" height="4" fill="#4fb0f0"/></svg>
<svg class="a" style="left:144px;top:484px" width="17" height="6" viewBox="0 0 17 6"><rect x="0" y="0" width="17" height="6" fill="#fff" opacity="0.6"/><rect x="1" y="1" width="15" height="4" fill="#e0240e"/><rect x="1" y="4" width="15" height="1" fill="#8c0c05"/><rect x="5.5" y="1" width="1" height="4" fill="#f0c0a0"/><rect x="10.5" y="1" width="1" height="4" fill="#d0b8e0"/></svg>
<div class="a" style="left:22px;top:508px;width:622px;height:160px;border:1px solid #a0a0a0;background:#fff"></div>
<div class="a" style="left:642px;top:509px;width:1px;height:158px;background:#d8d8d8"></div>
<div class="a" style="left:23px;top:509px;width:598px;height:18px;background:#f8f8f8"></div>
<div class="a" style="left:23px;top:527px;width:598px;height:1px;background:#dadada"></div>
<div class="a" style="left:23px;top:545px;width:598px;height:1px;background:#eeeeee"></div>
<div class="a" style="left:23px;top:528px;width:13px;height:17px;background:#f4f4f4"></div>
<div class="a" style="left:36px;top:509px;width:1px;height:18px;background:#dadada"></div>
<div class="a" style="left:36px;top:528px;width:1px;height:118px;background:#efefef"></div>
<div class="a" style="left:156px;top:509px;width:1px;height:18px;background:#dadada"></div>
<div class="a" style="left:156px;top:528px;width:1px;height:118px;background:#efefef"></div>
<div class="a" style="left:197px;top:509px;width:1px;height:18px;background:#dadada"></div>
<div class="a" style="left:197px;top:528px;width:1px;height:118px;background:#efefef"></div>
<div class="a" style="left:298px;top:509px;width:1px;height:18px;background:#dadada"></div>
<div class="a" style="left:298px;top:528px;width:1px;height:118px;background:#efefef"></div>
<div class="a" style="left:535px;top:509px;width:1px;height:18px;background:#dadada"></div>
<div class="a" style="left:535px;top:528px;width:1px;height:118px;background:#efefef"></div>
<div class="a" style="left:600px;top:509px;width:1px;height:18px;background:#dadada"></div>
<div class="a" style="left:600px;top:528px;width:1px;height:118px;background:#efefef"></div>
<div class="a" style="left:621px;top:509px;width:1px;height:18px;background:#dadada"></div>
<div class="a" style="left:621px;top:528px;width:1px;height:118px;background:#efefef"></div>
<div class="a" style="left:36px;top:509px;width:1px;height:137px;background:#e4e4e4"></div>
<div class="t" style="top:511.19px;font-size:11px;line-height:14px;color:#000;font-weight:normal;letter-spacing:-0.036px;left:38.75px;">Telefone Tipo</div>
<div class="t" style="top:511.19px;font-size:11px;line-height:14px;color:#000;font-weight:normal;letter-spacing:-0.547px;left:159.25px;">DDD</div>
<div class="t" style="top:511.19px;font-size:11px;line-height:14px;color:#000;font-weight:normal;letter-spacing:-0.475px;left:200px;">Número</div>
<div class="t" style="top:511.19px;font-size:11px;line-height:14px;color:#000;font-weight:normal;letter-spacing:-0.146px;left:301.25px;">Observação</div>
<div class="t" style="top:511.19px;font-size:11px;line-height:14px;color:#000;font-weight:normal;letter-spacing:-0.342px;left:537.5px;">Enviar SMS</div>
<div class="a" style="left:601px;top:509px;width:20px;height:18px;overflow:hidden">
<div class="t" style="top:2.19px;font-size:11px;line-height:14px;color:#000;font-weight:normal;letter-spacing:-0.3px;left:2px;">tele</div>
</div>
<div class="a" style="left:561px;top:530px;width:13px;height:13px;border:1px solid #6a6a6a;background:#fff"></div>
<div class="a" style="left:565px;top:534px;width:5px;height:5px;background:#333"></div>
<div class="a" style="left:652px;top:445px;width:349px;height:224px;border:1px solid #a0a0a0;background:#fff"></div>
<div class="a" style="left:652px;top:445px;width:350px;height:16px;border:1px solid #000;background:linear-gradient(#0000ff,#00008c);"></div>
<div class="t" style="top:446.02px;font-size:11.5px;line-height:14px;color:#fff;font-weight:bold;letter-spacing:-0.065px;left:657.5px;">Limite por Convênio</div>
<div class="a" style="left:684px;top:465px;width:32px;height:32px;border:1px solid #6e6e6e;background:#dcdcdc;"></div>
<div class="a" style="left:719px;top:465px;width:32px;height:32px;border:1px solid #6e6e6e;background:#dcdcdc;"></div>
<div class="a" style="left:754px;top:465px;width:32px;height:32px;border:1px solid #6e6e6e;background:#dcdcdc;"></div>
<div class="a" style="left:789px;top:465px;width:32px;height:32px;border:1px solid #6e6e6e;background:#dcdcdc;"></div>
<svg class="a" style="left:691px;top:472px" width="18" height="18" viewBox="0 0 18 18"><g stroke-linecap="round"><path d="M3.5,3.5 L14.5,14.5 M14.5,3.5 L3.5,14.5" stroke="#fff" stroke-width="5.2" opacity="0.8"/><path d="M3.5,3.5 L14.5,14.5 M14.5,3.5 L3.5,14.5" stroke="#8c0a05" stroke-width="3.8"/><path d="M3.5,3.5 L14.5,14.5 M14.5,3.5 L3.5,14.5" stroke="#e52a12" stroke-width="2.4"/></g></svg>
<svg class="a" style="left:725.0px;top:471.0px" width="20" height="20" viewBox="-1 -1 20 20"><defs><radialGradient id="gc735481" cx="0.35" cy="0.3" r="0.8"><stop offset="0" stop-color="#8ab8e8"/><stop offset="0.45" stop-color="#3e72b8"/><stop offset="1" stop-color="#1f4a85"/></radialGradient></defs><circle cx="9" cy="9" r="8.6" fill="url(#gc735481)" stroke="#1a2f55" stroke-width="0.9"/><path d="M3.2,7.5 A6.5,6.5 0 0 1 9,2.2" fill="none" stroke="#a8e0f0" stroke-width="2" opacity="0.8"/><path d="M4.5,9.6 L7.8,12.8 L13.6,4.8" fill="none" stroke="#1a3d70" stroke-width="3.6" stroke-linejoin="round"/><path d="M4.8,9.6 L7.8,12.4 L13.2,5.2" fill="none" stroke="#fffbd0" stroke-width="2.4" stroke-linejoin="miter"/></svg>
<svg class="a" style="left:761px;top:472px" width="18" height="18" viewBox="0 0 18 18"><path d="M6.5,1.5 H11.5 V6.5 H16.5 V11.5 H11.5 V16.5 H6.5 V11.5 H1.5 V6.5 H6.5 Z" fill="#1e88e0" stroke="#fff" stroke-width="0.8"/><rect x="7" y="7" width="4" height="4" fill="#4fb0f0"/></svg>
<svg class="a" style="left:797px;top:478px" width="17" height="6" viewBox="0 0 17 6"><rect x="0" y="0" width="17" height="6" fill="#fff" opacity="0.6"/><rect x="1" y="1" width="15" height="4" fill="#e0240e"/><rect x="1" y="4" width="15" height="1" fill="#8c0c05"/><rect x="5.5" y="1" width="1" height="4" fill="#f0c0a0"/><rect x="10.5" y="1" width="1" height="4" fill="#d0b8e0"/></svg>
<div class="a" style="left:834px;top:465px;width:32px;height:32px;border:1px solid #6e6e6e;background:#dcdcdc;"></div>
<svg class="a" style="left:834px;top:465px" width="32" height="32" viewBox="0 0 32 32"><defs><linearGradient id="ga834465" x1="0" y1="0" x2="0" y2="1"><stop offset="0" stop-color="#52d652"/><stop offset="0.45" stop-color="#60d060"/><stop offset="0.7" stop-color="#a0d4a0"/><stop offset="1" stop-color="#48c848"/></linearGradient></defs><rect x="5" y="6" width="2" height="19" fill="#003a00"/><polygon points="8.3,15.5 18.7,6 18.7,11 24.6,11 24.6,19.5 18.7,19.5 18.7,25" fill="url(#ga834465)" stroke="#002800" stroke-width="1.2" stroke-linejoin="miter"/></svg>
<div class="a" style="left:869px;top:465px;width:32px;height:32px;border:1px solid #6e6e6e;background:#dcdcdc;"></div>
<svg class="a" style="left:869px;top:465px" width="32" height="32" viewBox="0 0 32 32"><defs><linearGradient id="ga869465" x1="0" y1="0" x2="0" y2="1"><stop offset="0" stop-color="#52d652"/><stop offset="0.45" stop-color="#60d060"/><stop offset="0.7" stop-color="#a0d4a0"/><stop offset="1" stop-color="#48c848"/></linearGradient></defs><polygon points="7.3,15.5 17.3,6 17.3,11 23.7,11 23.7,19.5 17.3,19.5 17.3,25" fill="url(#ga869465)" stroke="#002800" stroke-width="1.2" stroke-linejoin="miter"/></svg>
<div class="a" style="left:904px;top:465px;width:32px;height:32px;border:1px solid #6e6e6e;background:#dcdcdc;"></div>
<svg class="a" style="left:904px;top:465px" width="32" height="32" viewBox="0 0 32 32"><defs><linearGradient id="ga904465" x1="0" y1="0" x2="0" y2="1"><stop offset="0" stop-color="#52d652"/><stop offset="0.45" stop-color="#60d060"/><stop offset="0.7" stop-color="#a0d4a0"/><stop offset="1" stop-color="#48c848"/></linearGradient></defs><polygon points="8.2,11 14.3,11 14.3,6 24.6,15.5 14.3,25 14.3,19.5 8.2,19.5" fill="url(#ga904465)" stroke="#002800" stroke-width="1.2" stroke-linejoin="miter"/></svg>
<div class="a" style="left:939px;top:465px;width:32px;height:32px;border:1px solid #6e6e6e;background:#dcdcdc;"></div>
<svg class="a" style="left:939px;top:465px" width="32" height="32" viewBox="0 0 32 32"><defs><linearGradient id="ga939465" x1="0" y1="0" x2="0" y2="1"><stop offset="0" stop-color="#52d652"/><stop offset="0.45" stop-color="#60d060"/><stop offset="0.7" stop-color="#a0d4a0"/><stop offset="1" stop-color="#48c848"/></linearGradient></defs><rect x="25" y="6" width="2" height="19" fill="#003a00"/><polygon points="7.2,11 13.1,11 13.1,6 23.7,15.5 13.1,25 13.1,19.5 7.2,19.5" fill="url(#ga939465)" stroke="#002800" stroke-width="1.2" stroke-linejoin="miter"/></svg>
<div class="a" style="left:655px;top:500px;width:345px;height:168px;border:1px solid #a0a0a0;border-bottom:none;background:#fff"></div>
<div class="a" style="left:656px;top:501px;width:314px;height:19px;background:linear-gradient(#f8f8f8,#ececec)"></div>
<div class="a" style="left:656px;top:519px;width:314px;height:1px;background:#000"></div>
<div class="a" style="left:656px;top:520px;width:314px;height:17px;background:#e6e6e6"></div>
<div class="a" style="left:656px;top:537px;width:314px;height:1px;background:#cfcfcf"></div>
<div class="a" style="left:667px;top:501px;width:1px;height:36px;background:#000"></div>
<div class="a" style="left:656px;top:520px;width:11px;height:17px;background:#f0f0f0;border-right:1px solid #000;border-bottom:1px solid #000"></div>
<svg class="a" style="left:658px;top:522px" width="8" height="13" viewBox="0 0 8 13"><polygon points="1,1 7,6.5 1,12" fill="#000"/></svg>
<div class="a" style="left:868px;top:501px;width:1px;height:19px;background:#000"></div>
<div class="a" style="left:868px;top:520px;width:1px;height:17px;background:#cfcfcf"></div>
<div class="a" style="left:969px;top:501px;width:1px;height:19px;background:#000"></div>
<div class="a" style="left:969px;top:520px;width:1px;height:17px;background:#cfcfcf"></div>
<div class="t" style="top:504.19px;font-size:11px;line-height:14px;color:#000;font-weight:normal;letter-spacing:-0.283px;left:670.5px;">Convênio</div>
<div class="t" style="top:504.19px;font-size:11px;line-height:14px;color:#000;font-weight:normal;letter-spacing:-0.519px;left:906.25px;">Limite</div>
<div class="a" style="left:6px;top:682px;width:1012px;height:1px;background:#a0a0a0"></div>
<div class="a" style="left:6px;top:683px;width:1012px;height:18px;background:#ffffff"></div>
<div class="a" style="left:6px;top:683px;width:151px;height:17px;border:1px solid #c8c8c8;border-right-color:#e0e0e0"></div>
<div class="a" style="left:862px;top:683px;width:156px;height:17px;background:#f0f0f0;border-left:1px solid #c8c8c8"></div>
<div class="t" style="top:685.02px;font-size:11.5px;line-height:14px;color:#141430;font-weight:normal;letter-spacing:-0.014px;left:161px;">| Shift+Esc - Cancelar |&nbsp; F2-Incluir | F3-Excluir | F4-Salvar | F5-Localizar | Shift + F6-Consulta Log | F9-Sair |</div>
<div class="t" style="top:685.50px;font-size:13px;line-height:14px;color:#000;font-weight:bold;letter-spacing:0.188px;left:864.5px;">Base Conhecimento</div>
<svg class="a" style="left:998px;top:686px" width="16" height="11" viewBox="0 0 16 11"><rect x="0.5" y="0.5" width="15" height="10" fill="#b8bcd0" stroke="#444"/><path d="M4,2 V8 M11,2 V8" stroke="#fff" stroke-width="2"/></svg>
<div class="a" style="left:0px;top:701px;width:1027px;height:7px;background:#64c8ea"></div>
<div class="a" style="left:6px;top:699px;width:1012px;height:1px;background:#a8a4a4"></div>
<div class="a" style="left:6px;top:700px;width:1012px;height:1px;background:#c0bcbc"></div>
<div class="a" style="left:0px;top:708px;width:1027px;height:1px;background:#2e2e2e"></div>
<div class="a" style="left:0px;top:709px;width:41px;height:1px;background:#5c5c5c"></div>
<div class="a" style="left:41px;top:709px;width:986px;height:1px;background:#f6f6f6"></div>
<div class="a" style="left:1018px;top:30px;width:9px;height:678px;background:#64c8ea"></div>
<div class="a" style="left:1025px;top:0px;width:1px;height:709px;background:#2a2e36"></div>
<div class="a" style="left:1026px;top:0px;width:1px;height:710px;background:#f4f4f4"></div>
<div class="t" style="top:689.34px;font-size:25px;line-height:14px;color:rgba(150,150,150,0.35);font-weight:normal;left:903px;">Ativar o Windows</div>
</body></html>
